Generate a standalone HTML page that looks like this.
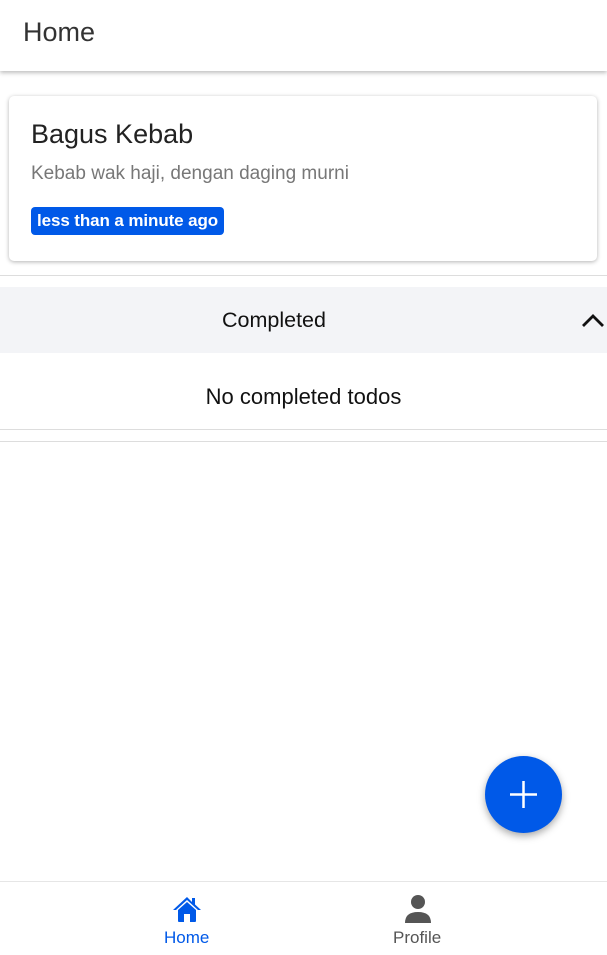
<!DOCTYPE html>
<html><head><meta charset="utf-8"><style>
*{box-sizing:border-box;margin:0;padding:0}
body{width:607px;height:955px;background:#fff;font-family:"Liberation Sans",sans-serif;position:relative;overflow:hidden}
.hdr{position:absolute;top:0;left:0;right:0;height:71px;background:#fff;box-shadow:0 2px 4px rgba(0,0,0,.25)}
.hdr span{position:absolute;left:23px;top:17px;font-size:27px;color:#333}
.card{position:absolute;left:9px;top:96px;width:588px;height:165px;border-radius:5px;box-shadow:0 1px 4px rgba(0,0,0,.3);background:#fff}
.t{position:absolute;left:22px;top:23px;font-size:27px;color:#222}
.d{position:absolute;left:22px;top:67px;font-size:19px;color:#777}
.b{position:absolute;left:22px;top:111px;height:28px;width:193px;background:#0059e8;border-radius:4px;color:#fff;font-weight:bold;font-size:17px;line-height:28px;padding-left:6px;letter-spacing:-.1px}
.l{position:absolute;left:0;right:0;height:1px;background:#ddd}
.sec{position:absolute;left:0;right:0;top:287px;height:66px;background:#f3f4f7}
.sec span{position:absolute;left:222px;top:21px;font-size:21.5px;color:#111}
.nc{position:absolute;left:0;right:0;top:384px;text-align:center;font-size:22px;color:#111}
.fab{position:absolute;left:485px;top:756px;width:77px;height:77px;border-radius:50%;background:#0059e8;box-shadow:0 3px 8px rgba(0,0,0,.35)}
.nav{position:absolute;left:0;right:0;top:881px;height:74px;border-top:1px solid #e6e6e6}
.nv{position:absolute;top:46px;font-size:17px}
</style></head><body>
<div class="hdr"><span>Home</span></div>
<div class="card"><div class="t">Bagus Kebab</div><div class="d">Kebab wak haji, dengan daging murni</div><div class="b">less than a minute ago</div></div>
<div class="l" style="top:275px"></div>
<div class="sec"><span>Completed</span>
<svg style="position:absolute;left:581px;top:24px" width="24" height="18" viewBox="0 0 24 18"><path d="M2 15 L12 5 L22 15" fill="none" stroke="#111" stroke-width="2.8"/></svg></div>
<div class="nc">No completed todos</div>
<div class="l" style="top:429px"></div>
<div class="l" style="top:441px"></div>
<div class="fab"><svg width="77" height="77"><path d="M38.5 25v27M25 38.5h27" stroke="#fff" stroke-width="2.5"/></svg></div>
<div class="nav">
<svg style="position:absolute;left:172px;top:13px" width="30" height="28" viewBox="0 0 30 28"><path d="M15 2 L1 15 L4 15 L15 5 L26 15 L29 15 L23 9.5 V3 H20 V7 Z" fill="#0059e8"/><path d="M6 15 L15 7 L24 15 V26 Q24 27 23 27 H18 V19 H12 V27 H7 Q6 27 6 26 Z" fill="#0059e8"/></svg>
<div class="nv" style="left:164px;color:#0059e8">Home</div>
<svg style="position:absolute;left:404px;top:12px" width="28" height="30" viewBox="0 0 28 30"><circle cx="14" cy="8" r="7" fill="#555"/><path d="M1 29 Q1 18 14 18 Q27 18 27 29 Z" fill="#555"/></svg>
<div class="nv" style="left:393px;color:#555">Profile</div>
</div>
</body></html>
